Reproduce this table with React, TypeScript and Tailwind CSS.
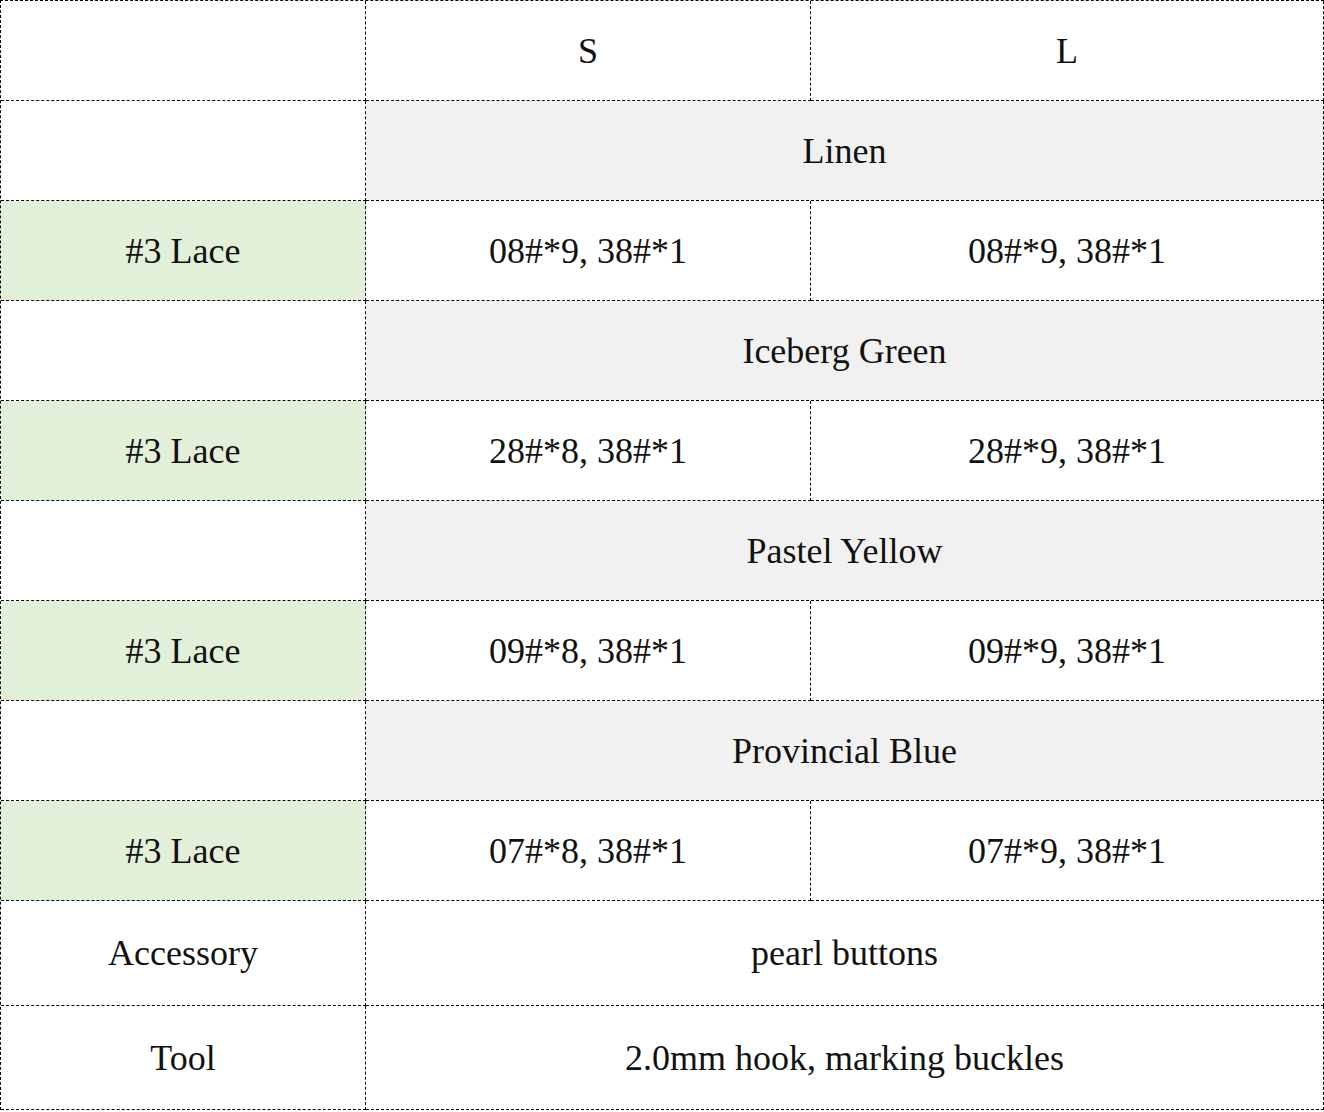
const sizes = ["S", "L"]

const colours = [
  { name: "Linen", s: "08#*9, 38#*1", l: "08#*9, 38#*1" },
  { name: "Iceberg Green", s: "28#*8, 38#*1", l: "28#*9, 38#*1" },
  { name: "Pastel Yellow", s: "09#*8, 38#*1", l: "09#*9, 38#*1" },
  { name: "Provincial Blue", s: "07#*8, 38#*1", l: "07#*9, 38#*1" },
]

const cell =
  "flex items-center justify-center border-r border-b border-dashed border-black"

export default function App() {
  return (
    <div
      className="w-[1324px] bg-white text-[36px] leading-none text-[#111]"
      style={{ fontFamily: '"Liberation Serif", "Times New Roman", serif' }}
    >
      <div className="grid grid-cols-[365px_445px_513px] grid-rows-[repeat(9,100px)_105px_104px] border-t border-l border-dashed border-black">
        {/* Header */}
        <div className={cell} />
        {sizes.map((s) => (
          <div key={s} className={cell}>
            {s}
          </div>
        ))}

        {colours.map((c) => (
          <Colour key={c.name} {...c} />
        ))}

        <div className={cell}>Accessory</div>
        <div className={`${cell} col-span-2`}>pearl buttons</div>

        <div className={cell}>Tool</div>
        <div className={`${cell} col-span-2`}>2.0mm hook, marking buckles</div>
      </div>
    </div>
  )
}

function Colour({ name, s, l }: { name: string; s: string; l: string }) {
  return (
    <>
      <div className={cell} />
      <div className={`${cell} col-span-2 bg-[#f1f1f1]`}>{name}</div>
      <div className={`${cell} bg-[#e2efd9]`}>#3 Lace</div>
      <div className={cell}>{s}</div>
      <div className={cell}>{l}</div>
    </>
  )
}
